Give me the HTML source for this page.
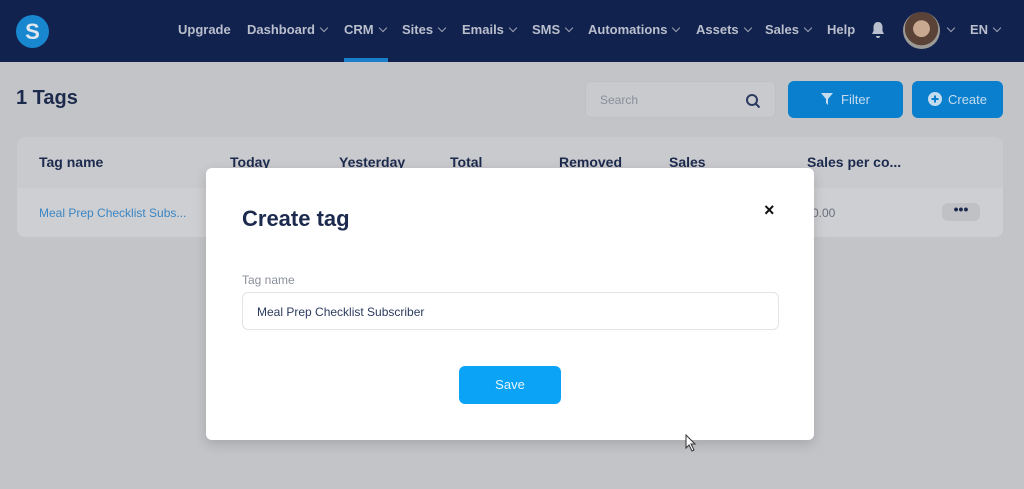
<!DOCTYPE html>
<html><head><meta charset="utf-8"><style>
*{box-sizing:border-box;margin:0;padding:0}
body{width:1024px;height:489px;overflow:hidden;background:#c3c4c7;font-family:"Liberation Sans",sans-serif;position:relative}
.nav{position:absolute;left:0;top:0;width:1024px;height:62px;background:#12224e}
.logo{position:absolute;left:16px;top:15px;width:33px;height:33px;border-radius:50%;background:#1987cf;color:#dfe6ee;font-weight:bold;font-size:22px;text-align:center;line-height:33px}
.ni{position:absolute;top:22px;color:#b9bfcc;font-weight:bold;font-size:13px}
.ch{display:inline-block;width:6px;height:6px;border-right:1.5px solid #9aa2b3;border-bottom:1.5px solid #9aa2b3;transform:rotate(45deg);margin-left:6px;position:relative;top:-3px}
.ul{position:absolute;left:344px;top:58px;width:44px;height:4px;background:#1a80c9}
.h1{position:absolute;left:16px;top:87px;font-size:20px;font-weight:bold;color:#1c2a4d}
.search{position:absolute;left:585px;top:81px;width:191px;height:37px;border-radius:6px;background:#c9cacd;border:1px solid #bfc0c3}
.search span{position:absolute;left:14px;top:11px;font-size:12px;color:#8a8f9b}
.btn{position:absolute;top:81px;height:37px;border-radius:6px;background:#0a7fce;color:#c5dcee;font-size:13px;text-align:center;line-height:37px}
.card{position:absolute;left:17px;top:137px;width:986px;height:100px;border-radius:8px;background:#c9cacd}
.row{position:absolute;left:17px;top:188px;width:986px;height:49px;background:#cecfd2;border-radius:0 0 8px 8px}
.th{position:absolute;top:154px;font-size:14px;font-weight:bold;color:#1c2a4d}
.modal{position:absolute;left:206px;top:168px;width:608px;height:272px;background:#fff;border-radius:6px;box-shadow:0 4px 12px rgba(0,0,0,.15)}
</style></head><body>
<div class="nav">
<div class="logo">S</div>
<span class="ni" style="left:178px">Upgrade</span>
<span class="ni" style="left:247px">Dashboard<i class="ch"></i></span>
<span class="ni" style="left:344px">CRM<i class="ch"></i></span>
<span class="ni" style="left:402px">Sites<i class="ch"></i></span>
<span class="ni" style="left:462px">Emails<i class="ch"></i></span>
<span class="ni" style="left:532px">SMS<i class="ch"></i></span>
<span class="ni" style="left:588px">Automations<i class="ch"></i></span>
<span class="ni" style="left:696px">Assets<i class="ch"></i></span>
<span class="ni" style="left:765px">Sales<i class="ch"></i></span>
<span class="ni" style="left:827px">Help</span>
<svg style="position:absolute;left:870px;top:21px" width="16" height="18" viewBox="0 0 16 18"><path d="M8 1C5 1 3.5 3.5 3.5 6v4L2 13h12l-1.5-3V6C12.5 3.5 11 1 8 1z M6 15a2 2 0 0 0 4 0z" fill="#b9bfcc"/></svg>
<div style="position:absolute;left:903px;top:12px;width:37px;height:37px;border-radius:50%;background:radial-gradient(circle at 50% 45%,#c9a892 0 30%,#5a4236 31% 60%,#9c9a96 61%)"></div>
<i class="ch" style="position:absolute;left:942px;top:25px"></i>
<span class="ni" style="left:970px">EN<i class="ch"></i></span>
<div class="ul"></div>
</div>
<div class="h1">1 Tags</div>
<div class="search"><span>Search</span>
<svg style="position:absolute;left:159px;top:11px" width="16" height="16" viewBox="0 0 16 16"><circle cx="7" cy="7" r="5" stroke="#2b3a60" stroke-width="2" fill="none"/><path d="M11 11l3.5 3.5" stroke="#2b3a60" stroke-width="2"/></svg></div>
<div class="btn" style="left:788px;width:115px"><svg width="12" height="12" viewBox="0 0 12 12" style="vertical-align:-1px;margin-right:8px"><path d="M0 0h12L7 6v6L5 10V6z" fill="#c5dcee"/></svg>Filter</div>
<div class="btn" style="left:912px;width:91px"><svg width="14" height="14" viewBox="0 0 14 14" style="vertical-align:-2px;margin-right:6px"><circle cx="7" cy="7" r="7" fill="#c5dcee"/><path d="M7 3.5v7M3.5 7h7" stroke="#0a7fce" stroke-width="2"/></svg>Create</div>
<div class="card"></div><div class="row"></div>
<span class="th" style="left:39px">Tag name</span>
<span class="th" style="left:230px">Today</span>
<span class="th" style="left:339px">Yesterday</span>
<span class="th" style="left:450px">Total</span>
<span class="th" style="left:559px">Removed</span>
<span class="th" style="left:669px">Sales</span>
<span class="th" style="left:807px">Sales per co...</span>
<span style="position:absolute;left:39px;top:206px;font-size:12px;color:#3a86c4">Meal Prep Checklist Subs...</span>
<span style="position:absolute;left:812px;top:206px;font-size:12px;color:#6a6f7a">0.00</span>
<div style="position:absolute;left:942px;top:203px;width:38px;height:18px;border-radius:6px;background:#bfc1c5;text-align:center;font-size:14px;line-height:12px;color:#1c2a4d;font-weight:bold">•••</div>
<div class="modal">
<div style="position:absolute;left:36px;top:38px;font-size:22px;font-weight:bold;color:#1c2a4d">Create tag</div>
<div style="position:absolute;left:558px;top:32px;font-size:18px;font-weight:bold;color:#111">×</div>
<div style="position:absolute;left:36px;top:105px;font-size:12px;color:#8a8f9b">Tag name</div>
<div style="position:absolute;left:36px;top:124px;width:537px;height:38px;border:1px solid #e2e4e8;border-radius:6px;padding:12px 0 0 14px;font-size:12px;color:#2b3a60">Meal Prep Checklist Subscriber</div>
<div style="position:absolute;left:253px;top:198px;width:102px;height:38px;border-radius:6px;background:#0aa3f5;color:#e6f4fd;text-align:center;line-height:38px;font-size:13px">Save</div>
</div>
<svg style="position:absolute;left:685px;top:434px" width="12" height="18" viewBox="0 0 12 18"><path d="M1 1v13l3-3 3 6 2-1-3-6h4z" fill="#fff" stroke="#333"/></svg>
</body></html>
